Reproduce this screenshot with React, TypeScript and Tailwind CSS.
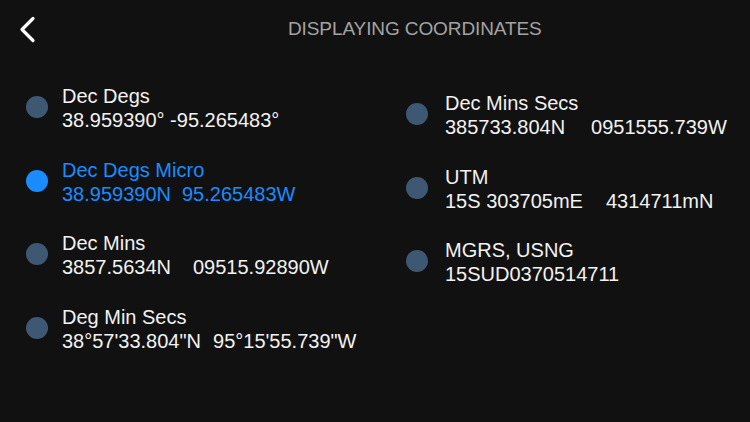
import { useState } from "react";

type Format = {
  id: string;
  label: string;
  parts: string[];
  gap: string;
};

const leftFormats: Format[] = [
  { id: "dd", label: "Dec Degs", parts: ["38.959390° -95.265483°"], gap: "" },
  { id: "ddm", label: "Dec Degs Micro", parts: ["38.959390N", "95.265483W"], gap: "ml-[11px]" },
  { id: "dm", label: "Dec Mins", parts: ["3857.5634N", "09515.92890W"], gap: "ml-[22px]" },
  { id: "dms", label: "Deg Min Secs", parts: ["38°57'33.804\"N", "95°15'55.739\"W"], gap: "ml-[12px]" },
];

const rightFormats: Format[] = [
  { id: "dmsd", label: "Dec Mins Secs", parts: ["385733.804N", "0951555.739W"], gap: "ml-[26px]" },
  { id: "utm", label: "UTM", parts: ["15S 303705mE", "4314711mN"], gap: "ml-[23px]" },
  { id: "mgrs", label: "MGRS, USNG", parts: ["15SUD0370514711"], gap: "" },
];

function FormatRow({
  format,
  selected,
  onSelect,
  textGap,
}: {
  format: Format;
  selected: boolean;
  onSelect: () => void;
  textGap: string;
}) {
  return (
    <button onClick={onSelect} className={`flex h-[73.5px] items-start text-left ${textGap}`}>
      <div
        className={`mt-[12px] h-[22px] w-[22px] shrink-0 rounded-full ${
          selected ? "bg-[#1a8cff]" : "bg-[#3e5874]"
        }`}
      />
      <div className={`text-[20px] leading-[24px] ${selected ? "text-[#1a8cff]" : "text-[#f2f2f2]"}`}>
        <div>{format.label}</div>
        <div className="whitespace-pre">
          {format.parts.map((p, i) => (
            <span key={p} className={i > 0 ? format.gap : ""}>
              {p}
            </span>
          ))}
        </div>
      </div>
    </button>
  );
}

export default function App() {
  const [selected, setSelected] = useState("ddm");

  return (
    <div
      className="h-[422px] w-[750px] overflow-hidden bg-[#111111]"
      style={{ fontFamily: '"Liberation Sans", Arial, sans-serif' }}
    >
      {/* Header */}
      <div className="flex h-[58px] items-center pl-[18px]">
        <button className="flex h-[26px] w-[18px] items-center">
          <svg width="18" height="27" viewBox="0 0 18 27" fill="none">
            <path d="M15 2.5 L4 13.5 L15 24.5" stroke="#ffffff" strokeWidth="3.2" strokeLinecap="round" strokeLinejoin="round" />
          </svg>
        </button>
        <h1 className="ml-[252px] text-[19px] tracking-[-0.1px] text-[#a3a3a3]">DISPLAYING COORDINATES</h1>
      </div>

      <div className="flex pt-[26px]">
        <div className="flex w-[380px] flex-col pl-[26px]">
          {leftFormats.map((f) => (
            <FormatRow
              key={f.id}
              format={f}
              selected={selected === f.id}
              onSelect={() => setSelected(f.id)}
              textGap="gap-[14px]"
            />
          ))}
        </div>
        <div className="flex flex-col pl-[26px] pt-[7px]">
          {rightFormats.map((f) => (
            <FormatRow
              key={f.id}
              format={f}
              selected={selected === f.id}
              onSelect={() => setSelected(f.id)}
              textGap="gap-[17px]"
            />
          ))}
        </div>
      </div>
    </div>
  );
}
